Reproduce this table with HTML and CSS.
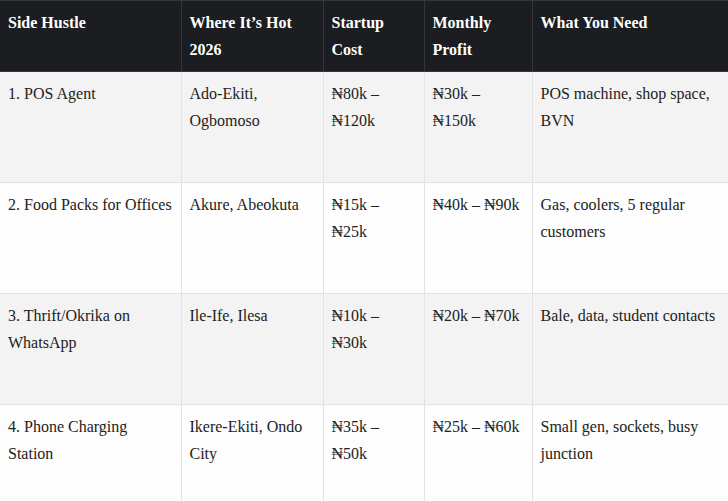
FILE: index.html
```html
<!DOCTYPE html>
<html>
<head>
<meta charset="utf-8">
<link rel="stylesheet" href="styles.css">
</head>
<body>
<table class="hustle-table">
  <colgroup>
    <col class="c1"><col class="c2"><col class="c3"><col class="c4"><col class="c5">
  </colgroup>
  <thead>
    <tr>
      <th>Side Hustle</th>
      <th>Where It’s Hot 2026</th>
      <th>Startup Cost</th>
      <th>Monthly Profit</th>
      <th>What You Need</th>
    </tr>
  </thead>
  <tbody>
    <tr class="odd">
      <td>1. POS Agent</td>
      <td>Ado-Ekiti, Ogbomoso</td>
      <td>₦80k – ₦120k</td>
      <td>₦30k – ₦150k</td>
      <td>POS machine, shop space, BVN</td>
    </tr>
    <tr>
      <td>2. Food Packs for Offices</td>
      <td>Akure, Abeokuta</td>
      <td>₦15k – ₦25k</td>
      <td>₦40k – ₦90k</td>
      <td>Gas, coolers, 5 regular customers</td>
    </tr>
    <tr class="odd">
      <td>3. Thrift/Okrika on WhatsApp</td>
      <td>Ile-Ife, Ilesa</td>
      <td>₦10k – ₦30k</td>
      <td>₦20k – ₦70k</td>
      <td>Bale, data, student contacts</td>
    </tr>
    <tr>
      <td>4. Phone Charging Station</td>
      <td>Ikere-Ekiti, Ondo City</td>
      <td>₦35k – ₦50k</td>
      <td>₦25k – ₦60k</td>
      <td>Small gen, sockets, busy junction</td>
    </tr>
  </tbody>
</table>
</body>
</html>
```
FILE: styles.css
```css
html, body {
  margin: 0;
  padding: 0;
  background: #ffffff;
}
.hustle-table {
  border-collapse: collapse;
  table-layout: fixed;
  width: 728px;
  font-family: "Liberation Serif", "Times New Roman", serif;
  font-size: 16px;
  line-height: 27px;
  color: #222222;
}
.c1 { width: 181px; }
.c2 { width: 142px; }
.c3 { width: 101px; }
.c4 { width: 108px; }
.c5 { width: 196px; }
.hustle-table th {
  background: #1b1d20;
  color: #ffffff;
  font-weight: bold;
  text-align: left;
  vertical-align: top;
  padding: 8px 8px;
  border: 1px solid #33363a;
  height: 54px;
}
.hustle-table td {
  background: #fdfdfd;
  vertical-align: top;
  padding: 8px 8px;
  border: 1px solid #e2e2e2;
  height: 94px;
}
.hustle-table tr.odd td {
  background: #f3f3f3;
}
.hustle-table th:first-child,
.hustle-table td:first-child { border-left: 0; }
```
